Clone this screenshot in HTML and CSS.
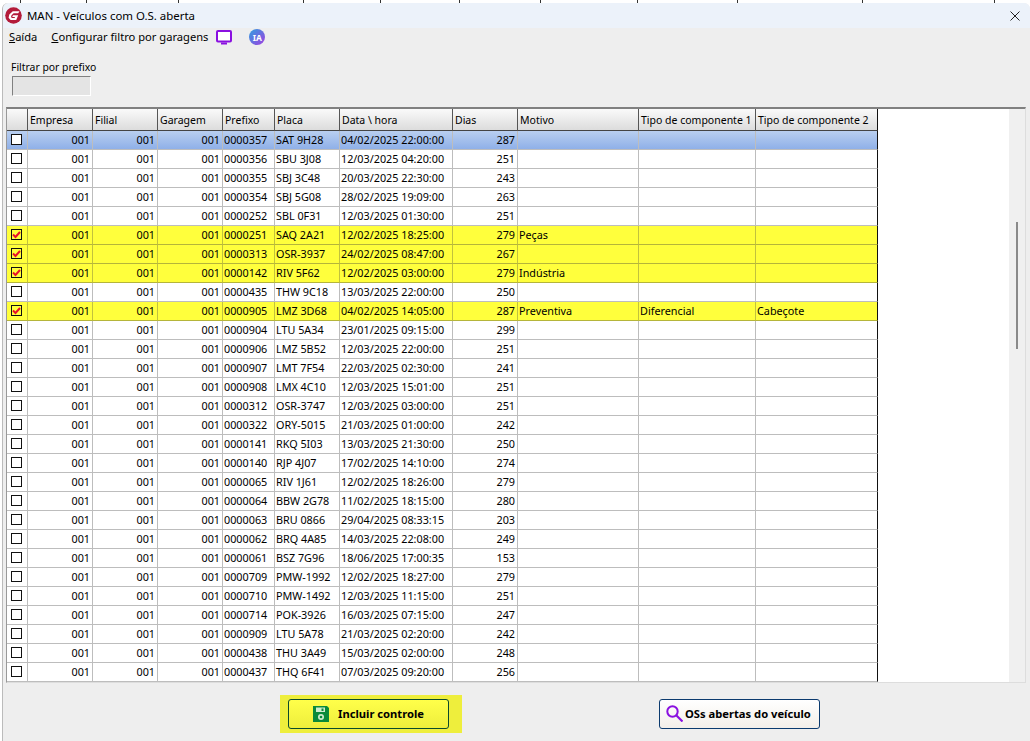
FILE: index.html
```html
<!DOCTYPE html>
<html lang="pt-BR">
<head>
<meta charset="utf-8">
<title>MAN - Veículos com O.S. aberta</title>
<link rel="stylesheet" href="styles.css">
</head>
<body>
<div class="backdrop"></div>
<main class="window">
  <header class="titlebar">
    <svg class="logo" width="17" height="17" viewBox="0 0 17 17"><circle cx="8.500" cy="8.500" r="8.300" fill="#b31b3a"/><path d="M14.500 4.200H7.800L4.300 7.500 3.600 10.800 5.600 13H11.200L13.200 8.300H8L7.200 10.100H10L9.600 11H6.900L6 10 6.500 8.200 8.600 6.200H13.200z" fill="#fff"/></svg>
    <span class="title">MAN - Veículos com O.S. aberta</span>
    <svg class="close" width="10" height="10" viewBox="0 0 10 10"><path d="M.5.500l9 9M9.500.500l-9 9" stroke="#222" stroke-width="1" fill="none"/></svg>
  </header>
  <nav class="menubar">
    <span class="menu"><u>S</u>aída</span>
    <span class="menu"><u>C</u>onfigurar filtro por garagens</span>
    <svg class="tv" width="16" height="15" viewBox="0 0 16 15"><rect x="1" y="1" width="14" height="10.500" rx="1" fill="#fff" stroke="#8a10e0" stroke-width="2"/><rect x="5" y="12.500" width="6" height="2" fill="#8a10e0"/></svg>
    <span class="ia">IA</span>
  </nav>
  <section class="filter">
    <label class="filter-label">Filtrar por prefixo</label>
    <div class="filter-input"></div>
  </section>
  <section class="grid-frame">
    <div class="grid-wrap">
      <table class="grid">
        <colgroup><col class="c0"><col class="c1"><col class="c2"><col class="c3"><col class="c4"><col class="c5"><col class="c6"><col class="c7"><col class="c8"><col class="c9"><col class="c10"></colgroup>
        <thead><tr><th></th><th>Empresa</th><th>Filial</th><th>Garagem</th><th>Prefixo</th><th>Placa</th><th>Data \ hora</th><th>Dias</th><th>Motivo</th><th>Tipo de componente 1</th><th>Tipo de componente 2</th></tr></thead>
        <tbody id="rows"></tbody>
      </table>
    </div>
    <div class="scrollbar"><div class="thumb"></div></div>
  </section>
  <footer class="footer">
    <div class="highlight"><button class="btn btn-save">
      <svg width="16" height="16" viewBox="0 0 16 16"><path d="M0 0H14L16 2V16H0z" fill="#0a8a3a"/><rect x="3" y="1.500" width="9" height="4.500" fill="#cfeccf"/><rect x="8.500" y="2.500" width="2" height="2.500" fill="#0a8a3a"/><circle cx="8" cy="11" r="3" fill="#cfeccf"/><circle cx="8" cy="11" r="1.300" fill="#0a8a3a"/></svg>
      Incluir controle</button></div>
    <button class="btn btn-os">
      <svg width="17" height="17" viewBox="0 0 17 17"><circle cx="6.500" cy="6.500" r="5.200" fill="none" stroke="#8a10e0" stroke-width="2"/><path d="M10.500 10.500l6 6" stroke="#8a10e0" stroke-width="2.200"/></svg>
      OSs abertas do veículo</button>
  </footer>
</main>
<script src="app.js"></script>
</body>
</html>
```
FILE: styles.css
```css
* { box-sizing: border-box; }
html, body { margin: 0; height: 100%; overflow: hidden; }
body { background: #fff; font-family: "Noto Sans", "DejaVu Sans", sans-serif; font-size: 10.8px; color: #000; }
.backdrop {
  height: 3px;
  background-color: #fff;
  background-image: linear-gradient(#333, #333), linear-gradient(#333, #333), linear-gradient(#333, #333), linear-gradient(#333, #333), linear-gradient(#333, #333), linear-gradient(#333, #333), linear-gradient(#333, #333), linear-gradient(#333, #333), linear-gradient(#333, #333), linear-gradient(#333, #333), linear-gradient(#333, #333);
  background-repeat: no-repeat;
  background-size: 1px 3px;
  background-position: 20px 0, 86px 0, 178px 0, 303px 0, 380px 0, 459px 0, 540px 0, 637px 0, 737px 0, 862px 0, 994px 0;
}
.window { margin-left: 2px; height: 738px; background: #eee; border-radius: 6px 6px 0 0; border-left: 1px solid #bbb; display: flex; flex-direction: column; }
.titlebar { height: 25px; flex: none; background: #ecf2fa; display: flex; align-items: center; padding-left: 2px; border-radius: 6px 6px 0 0; }
.logo { flex: none; }
.title { margin-left: 5px; font-size: 11.45px; }
.close { margin-left: auto; margin-right: 10px; }
.menubar { height: 18px; flex: none; display: flex; align-items: center; padding-left: 6px; font-size: 11.15px; }
.menu { margin: -2px 14px 0 0; }
.tv { margin-left: -6px; }
.ia { margin-left: 17px; width: 16px; height: 16px; border-radius: 50%; background: linear-gradient(135deg, #2f9fe0, #a03fe0); color: #fff; font-size: 8.5px; font-weight: 700; display: flex; align-items: center; justify-content: center; }
.filter { height: 61px; flex: none; padding: 14px 0 0 8px; }
.filter-label { display: block; font-size: 10.4px; line-height: 15px; }
.filter-input { margin: 1px 0 0 1px; width: 79px; height: 20px; background: #e4e4e4; border: 1px solid #fff; border-top: 1px solid #808080; border-left: 1px solid #808080; }
.grid-frame { margin-left: 3px; width: 1020px; height: 576px; flex: none; display: flex; border: 1px solid #ddd; border-top: 2px solid #808080; border-left: 1px solid #999; background: #fff; }
.grid-wrap { width: 1002px; overflow: hidden; background: #fff; }
.grid { table-layout: fixed; border-collapse: separate; border-spacing: 0; width: 871px; }
.c0 { width: 21px; }
.c1, .c2, .c3, .c5, .c7 { width: 65px; }
.c4 { width: 52px; }
.c6 { width: 113px; }
.c8 { width: 121px; }
.c9 { width: 117px; }
.c10 { width: 122px; }
.grid th { height: 22px; padding: 0 0 0 2px; font-size: 10.5px; font-weight: 400; text-align: left; background: linear-gradient(#fafafa, #dcdcdc); border-right: 1px solid #555; border-bottom: 1px solid #444; white-space: nowrap; overflow: hidden; }
.grid td { height: 19px; padding: 0 2px 1px 1px; border-right: 1px solid #bdbdbd; border-bottom: 1px solid #bdbdbd; white-space: nowrap; overflow: hidden; }
.grid td:last-child, .grid th:last-child { border-right: 1px solid #111; }
.grid td.num { text-align: right; }
.grid td.cb { padding: 0 0 2px; }
.box { display: block; width: 11px; height: 11px; border: 1px solid #111; background: #fff; margin-left: 4px; }
.on .box { background: #ffff3c; }
.box svg { display: block; }
.sel td { background: linear-gradient(#b9cff0, #8fb0e8); }
.grid .on td { background: #ffff3c; border-bottom-color: #b5b53a; border-right-color: #c2c23c; }
.grid .on td:last-child { border-right-color: #111; }
.scrollbar { flex: 1; background: #f0f0f0; position: relative; }
.thumb { position: absolute; top: 113px; left: 7px; width: 2px; height: 127px; background: #8a8a8a; }
.footer { flex: 1; display: flex; align-items: flex-start; padding-top: 12px; }
.highlight { margin-left: 277px; width: 182px; height: 38px; background: #eeee3c; display: flex; align-items: center; padding-left: 8px; }
.btn { font-family: inherit; font-size: 11.2px; font-weight: 700; color: #000; height: 30px; border-radius: 3px; display: flex; align-items: center; padding: 0 0 1px; }
.btn-save { width: 161px; background: linear-gradient(#ffff4a, #eeee3c); border: 1px solid #0b4a2a; justify-content: center; gap: 9px; }
.btn-os { margin: 4px 0 0 197px; width: 161px; background: linear-gradient(#fff, #f3efe9); border: 1px solid #0b3a6e; padding-left: 6px; gap: 2px; }
```
FILE: app.js
```js
var data = [
["0000357","SAT 9H28","04/02/2025 22:00:00","287","","",""],
["0000356","SBU 3J08","12/03/2025 04:20:00","251","","",""],
["0000355","SBJ 3C48","20/03/2025 22:30:00","243","","",""],
["0000354","SBJ 5G08","28/02/2025 19:09:00","263","","",""],
["0000252","SBL 0F31","12/03/2025 01:30:00","251","","",""],
["0000251","SAQ 2A21","12/02/2025 18:25:00","279","Peças","",""],
["0000313","OSR-3937","24/02/2025 08:47:00","267","","",""],
["0000142","RIV 5F62","12/02/2025 03:00:00","279","Indústria","",""],
["0000435","THW 9C18","13/03/2025 22:00:00","250","","",""],
["0000905","LMZ 3D68","04/02/2025 14:05:00","287","Preventiva","Diferencial","Cabeçote"],
["0000904","LTU 5A34","23/01/2025 09:15:00","299","","",""],
["0000906","LMZ 5B52","12/03/2025 22:00:00","251","","",""],
["0000907","LMT 7F54","22/03/2025 02:30:00","241","","",""],
["0000908","LMX 4C10","12/03/2025 15:01:00","251","","",""],
["0000312","OSR-3747","12/03/2025 03:00:00","251","","",""],
["0000322","ORY-5015","21/03/2025 01:00:00","242","","",""],
["0000141","RKQ 5I03","13/03/2025 21:30:00","250","","",""],
["0000140","RJP 4J07","17/02/2025 14:10:00","274","","",""],
["0000065","RIV 1J61","12/02/2025 18:26:00","279","","",""],
["0000064","BBW 2G78","11/02/2025 18:15:00","280","","",""],
["0000063","BRU 0866","29/04/2025 08:33:15","203","","",""],
["0000062","BRQ 4A85","14/03/2025 22:08:00","249","","",""],
["0000061","BSZ 7G96","18/06/2025 17:00:35","153","","",""],
["0000709","PMW-1992","12/02/2025 18:27:00","279","","",""],
["0000710","PMW-1492","12/03/2025 11:15:00","251","","",""],
["0000714","POK-3926","16/03/2025 07:15:00","247","","",""],
["0000909","LTU 5A78","21/03/2025 02:20:00","242","","",""],
["0000438","THU 3A49","15/03/2025 02:00:00","248","","",""],
["0000437","THQ 6F41","07/03/2025 09:20:00","256","","",""]
];
var on = {5:1,6:1,7:1,9:1};
var check = '<svg width="9" height="9" viewBox="0 0 9 9"><path d="M1 4.500l2.500 2.500L8 2" fill="none" stroke="#e8102a" stroke-width="2"/></svg>';
document.getElementById("rows").innerHTML = data.map(function (r, i) {
  var cls = i === 0 ? "sel" : on[i] ? "on" : "";
  return '<tr class="' + cls + '"><td class="cb"><span class="box">' + (on[i] ? check : "") + '</span></td>' +
    '<td class="num">001</td><td class="num">001</td><td class="num">001</td>' +
    '<td>' + r[0] + '</td><td>' + r[1] + '</td><td>' + r[2] + '</td><td class="num">' + r[3] + '</td><td>' + r[4] + '</td><td>' + r[5] + '</td><td>' + r[6] + '</td></tr>';
}).join("");
```
